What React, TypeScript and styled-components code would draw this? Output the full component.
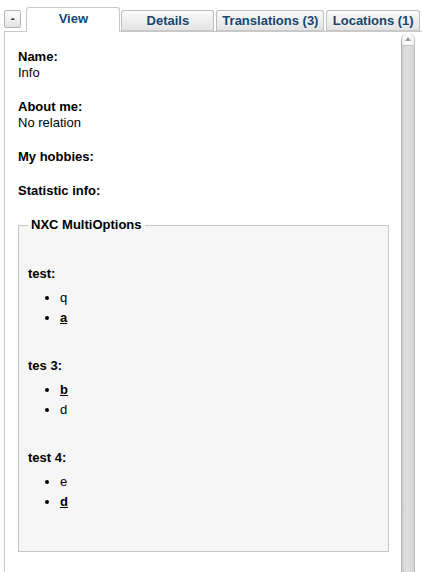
import React from "react";
import styled, { createGlobalStyle } from "styled-components";

const Global = createGlobalStyle`
  html, body { margin: 0; padding: 0; background: #fff; height: 100%; overflow: hidden; }
  body { font-family: "Liberation Sans", Arial, sans-serif; font-size: 13px; color: #000; }
  #root { height: 100%; }
`;

const Page = styled.div`
  height: 572px;
  display: flex;
  flex-direction: column;
  padding: 7px 0 0 4px;
  box-sizing: border-box;
`;

const TabBar = styled.div`
  display: flex;
  align-items: flex-end;
  height: 24px;
  position: relative;
  z-index: 1;
`;

const CollapseButton = styled.button`
  box-sizing: border-box;
  width: 18px;
  height: 18px;
  margin: 0 5px 3px 0;
  padding: 0;
  border: 1px solid #b4b4b4;
  border-radius: 2px;
  background: linear-gradient(#ffffff, #e2e2e2);
  font: bold 12px "Liberation Sans", Arial, sans-serif;
  color: #333;
  line-height: 14px;
`;

const Tab = styled.div<{ $active?: boolean }>`
  box-sizing: border-box;
  min-width: ${(p) => (p.$active ? 94 : 93)}px;
  height: ${(p) => (p.$active ? 25 : 21)}px;
  margin-right: ${(p) => (p.$active ? 1 : 2)}px;
  margin-bottom: ${(p) => (p.$active ? -1 : 0)}px;
  padding: 0 7px ${(p) => (p.$active ? 4 : 0)}px;
  display: flex;
  align-items: center;
  justify-content: center;
  font-weight: bold;
  font-size: 13px;
  color: #17466e;
  white-space: nowrap;
  border: 1px solid ${(p) => (p.$active ? "#c8c8c8" : "#bdbdbd")};
  border-bottom: ${(p) => (p.$active ? "none" : "1px solid #c8c8c8")};
  border-radius: 3px 3px 0 0;
  background: ${(p) => (p.$active ? "#fff" : "linear-gradient(#fbfbfb, #e3e3e3)")};
`;

const Panel = styled.div`
  flex: 1;
  display: flex;
  border-top: 1px solid #c8c8c8;
  border-left: 1px solid #c8c8c8;
  min-height: 0;
`;

const Content = styled.div`
  flex: 1;
  padding: 17px 12px 0 13px;
`;

const Field = styled.div`
  margin-bottom: 18px;
  line-height: 16px;
`;

const Label = styled.div`
  font-weight: bold;
`;

const Value = styled.div``;

const FieldSet = styled.fieldset`
  margin: 1px 0 0;
  padding: 0 9px 39px;
  border: 1px solid #c6c6c6;
  background: #f6f6f6;
  line-height: 16px;
`;

const Legend = styled.legend`
  padding: 0 3px;
  font-weight: bold;
  line-height: 16px;
`;

const Group = styled.div<{ $first?: boolean }>`
  padding-top: ${(p) => (p.$first ? 33 : 30)}px;
`;

const OptionList = styled.ul`
  margin: 6px 0 0;
  padding: 0 0 0 32px;
  list-style: disc;
`;

const Option = styled.li`
  line-height: 20px;
`;

const Chosen = styled.a`
  font-weight: bold;
  color: #000;
  text-decoration: underline;
`;

const Scrollbar = styled.div`
  box-sizing: border-box;
  width: 14px;
  margin: 1px 7px 0 0;
  display: flex;
  flex-direction: column;
  border-left: 1px solid #b0b0b0;
  border-right: 1px solid #c0c0c0;
  border-radius: 7px 7px 0 0;
  background: linear-gradient(to right, #cfcfcf, #e0e0e0 40%, #d4d4d4);
`;

const ArrowButton = styled.div`
  height: 13px;
  border-radius: 6px 6px 0 0;
  background: linear-gradient(to right, #efefef, #ffffff 50%, #efefef);
  border-bottom: 1px solid #c4c4c4;
  display: flex;
  justify-content: center;
  padding-top: 4px;
  box-sizing: border-box;
`;

const ArrowUp = styled.div`
  width: 0;
  height: 0;
  border-left: 3px solid transparent;
  border-right: 3px solid transparent;
  border-bottom: 4px solid #9a9a9a;
`;

const groups = [
  { title: "test:", items: [{ t: "q" }, { t: "a", sel: true }] },
  { title: "tes 3:", items: [{ t: "b", sel: true }, { t: "d" }] },
  { title: "test 4:", items: [{ t: "e" }, { t: "d", sel: true }] },
];

export default function App() {
  return (
    <>
      <Global />
      <Page>
        <TabBar>
          <CollapseButton>-</CollapseButton>
          <Tab $active>View</Tab>
          <Tab>Details</Tab>
          <Tab>Translations (3)</Tab>
          <Tab>Locations (1)</Tab>
        </TabBar>
        <Panel>
          <Content>
            <Field>
              <Label>Name:</Label>
              <Value>Info</Value>
            </Field>
            <Field>
              <Label>About me:</Label>
              <Value>No relation</Value>
            </Field>
            <Field>
              <Label>My hobbies:</Label>
            </Field>
            <Field>
              <Label>Statistic info:</Label>
            </Field>
            <FieldSet>
              <Legend>NXC MultiOptions</Legend>
              {groups.map((g, i) => (
                <Group key={i} $first={i === 0}>
                  <Label>{g.title}</Label>
                  <OptionList>
                    {g.items.map((it, j) => (
                      <Option key={j}>
                        {it.sel ? <Chosen href="#">{it.t}</Chosen> : it.t}
                      </Option>
                    ))}
                  </OptionList>
                </Group>
              ))}
            </FieldSet>
          </Content>
          <Scrollbar>
            <ArrowButton>
              <ArrowUp />
            </ArrowButton>
          </Scrollbar>
        </Panel>
      </Page>
    </>
  );
}
